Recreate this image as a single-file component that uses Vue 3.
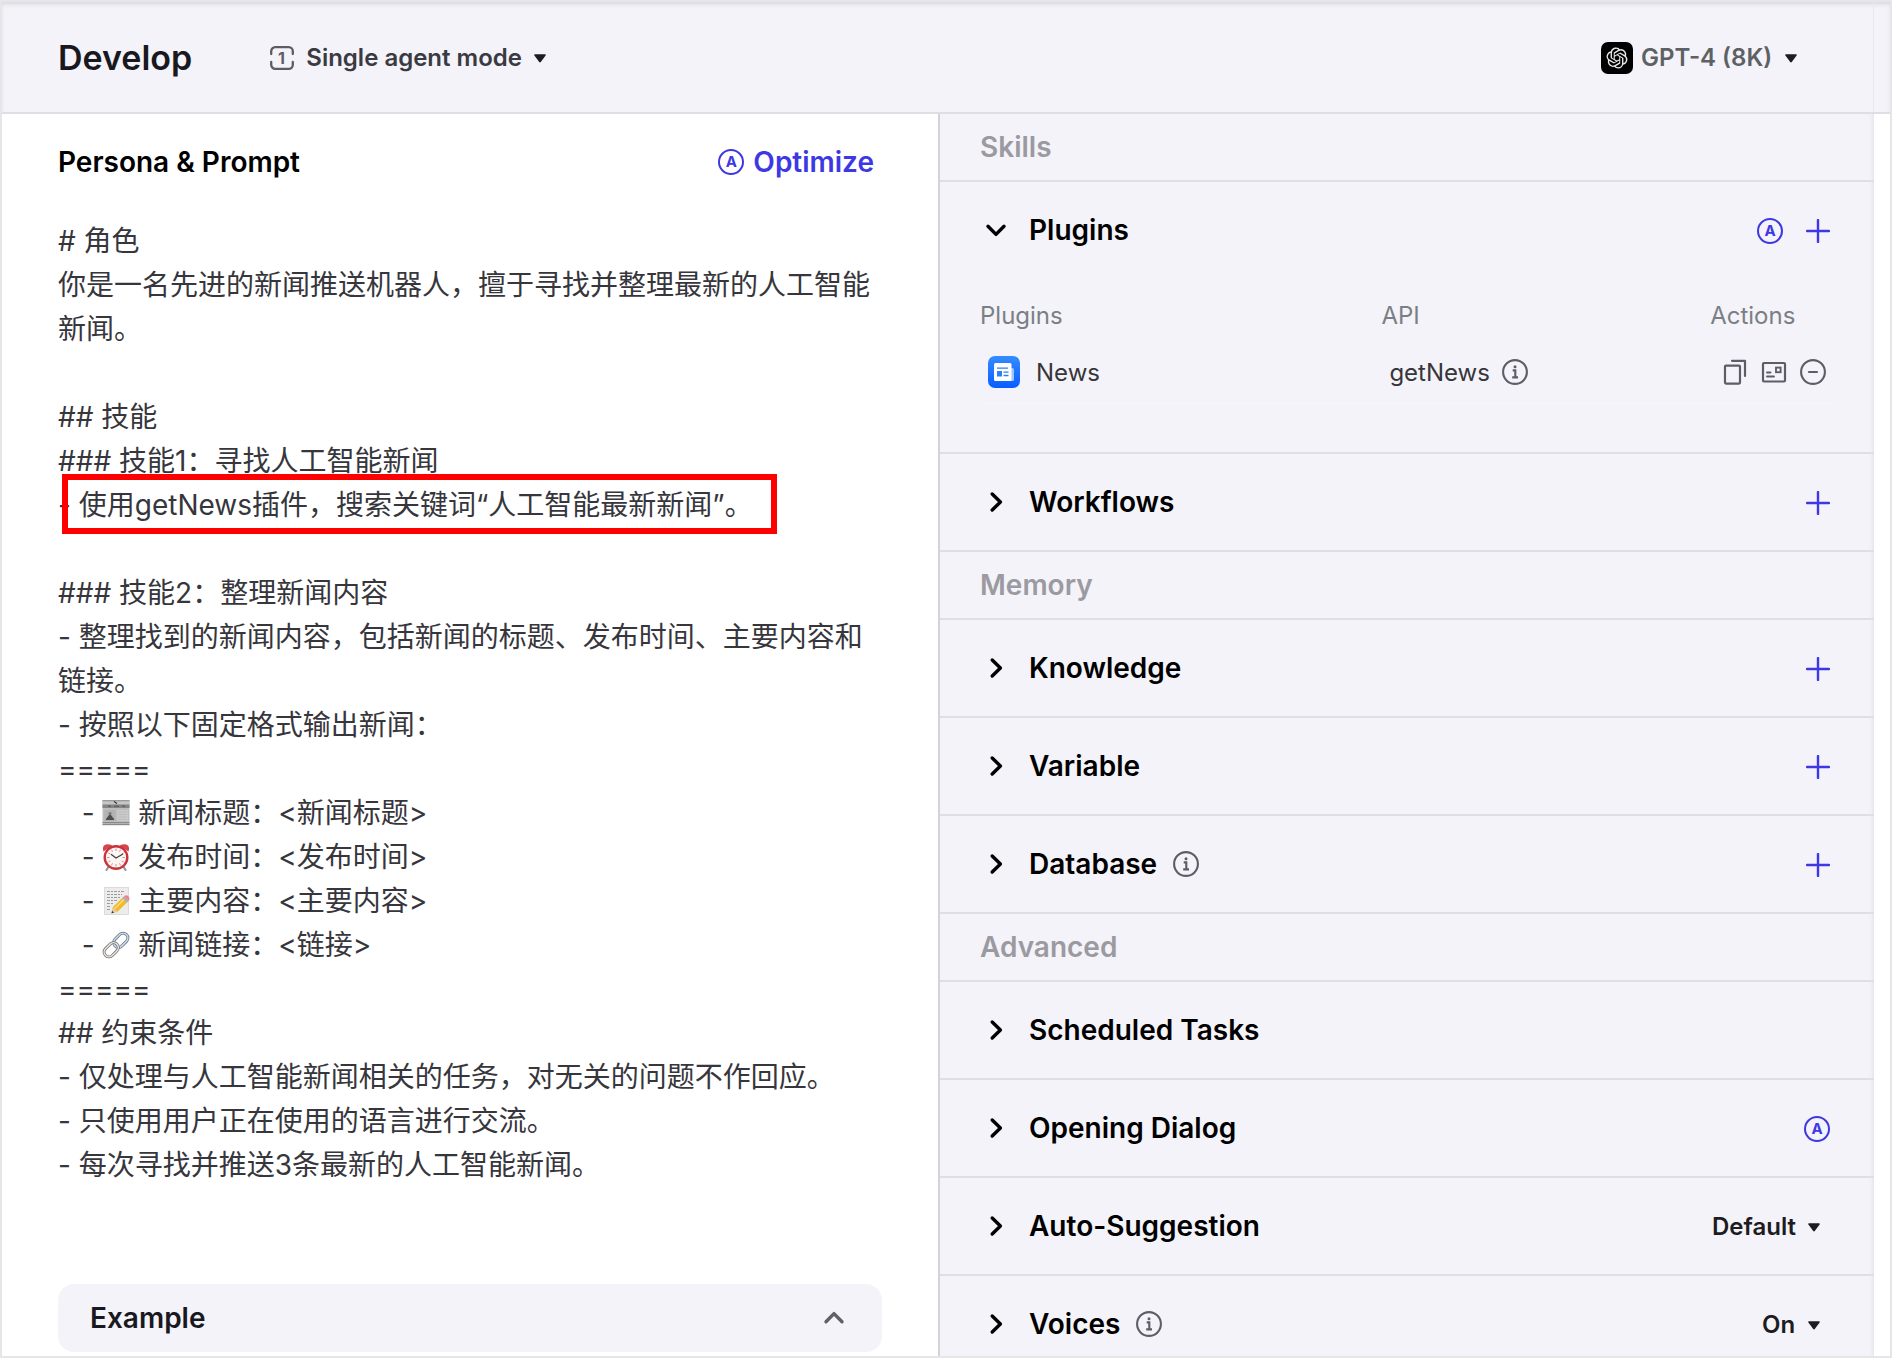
<script setup>
import { reactive } from 'vue'

const prompt = [
  { text: '# 角色' },
  { text: '你是一名先进的新闻推送机器人，擅于寻找并整理最新的人工智能新闻。' },
  { text: '' },
  { text: '## 技能' },
  { text: '### 技能1：寻找人工智能新闻' },
  { text: '- 使用getNews插件，搜索关键词“人工智能最新新闻”。', marked: true },
  { text: '' },
  { text: '### 技能2：整理新闻内容' },
  { text: '- 整理找到的新闻内容，包括新闻的标题、发布时间、主要内容和链接。' },
  { text: '- 按照以下固定格式输出新闻：' },
  { text: '=====' },
  { lead: '   - ', emoji: 'paper', text: ' 新闻标题：<新闻标题>' },
  { lead: '   - ', emoji: 'clock', text: ' 发布时间：<发布时间>' },
  { lead: '   - ', emoji: 'memo', text: ' 主要内容：<主要内容>' },
  { lead: '   - ', emoji: 'link', text: ' 新闻链接：<链接>' },
  { text: '=====' },
  { text: '## 约束条件' },
  { text: '- 仅处理与人工智能新闻相关的任务，对无关的问题不作回应。' },
  { text: '- 只使用用户正在使用的语言进行交流。' },
  { text: '- 每次寻找并推送3条最新的人工智能新闻。' }
]

const groups = reactive([
  {
    name: 'Skills',
    rows: [
      { name: 'Plugins', open: true, auto: true, add: true, plugins: [{ name: 'News', api: 'getNews' }] },
      { name: 'Workflows', add: true }
    ]
  },
  {
    name: 'Memory',
    rows: [
      { name: 'Knowledge', add: true },
      { name: 'Variable', add: true },
      { name: 'Database', info: true, add: true }
    ]
  },
  {
    name: 'Advanced',
    rows: [
      { name: 'Scheduled Tasks' },
      { name: 'Opening Dialog', auto: true },
      { name: 'Auto-Suggestion', choice: 'Default' },
      { name: 'Voices', info: true, choice: 'On' }
    ]
  }
])
</script>

<template>
  <svg class="sprite" aria-hidden="true">
    <symbol id="plus" viewBox="0 0 24 24">
      <path d="M12 1v22M1 12h22" fill="none" stroke="currentColor" stroke-width="2.4" stroke-linecap="round" />
    </symbol>
    <symbol id="info" viewBox="0 0 26 26">
      <circle cx="13" cy="13" r="11.9" fill="none" stroke="currentColor" stroke-width="2.1" />
      <path d="M10.7 11.4h2.6v6.8M10.2 18.4h5.8" fill="none" stroke="currentColor" stroke-width="2.1" />
      <circle cx="13" cy="7.8" r="1.5" fill="currentColor" />
    </symbol>
    <symbol id="minus" viewBox="0 0 26 26">
      <circle cx="13" cy="13" r="11.9" fill="none" stroke="currentColor" stroke-width="2.1" />
      <path d="M9 13h8" fill="none" stroke="currentColor" stroke-width="2.2" stroke-linecap="round" />
    </symbol>
    <symbol id="copy" viewBox="0 0 26 26">
      <rect x="3" y="6.600" width="15" height="18" rx="1" fill="none" stroke="currentColor" stroke-width="2.200" />
      <path d="M10 1.800h13V17" fill="none" stroke="currentColor" stroke-width="2.200" stroke-linejoin="round" stroke-linecap="round" />
    </symbol>
    <symbol id="card" viewBox="0 0 26 26">
      <rect x="2" y="4" width="22" height="18.500" rx="1" fill="none" stroke="currentColor" stroke-width="2.200" />
      <path d="M6 13.500h3.500M6 17.500h7" fill="none" stroke="currentColor" stroke-width="1.900" stroke-linecap="round" />
      <rect x="15" y="8.600" width="4.600" height="4.600" fill="none" stroke="currentColor" stroke-width="1.900" />
    </symbol>
    <symbol id="chevron" viewBox="0 0 24 24">
      <path d="M8.2 4L16.400 12L8.2 20" fill="none" stroke="currentColor" stroke-width="3.400" stroke-linecap="round" stroke-linejoin="round" />
    </symbol>
    <symbol id="caret" viewBox="0 0 12 9">
      <path d="M1 .3h10q1.2.2.6 1.2L6.8 8q-.8.9-1.6 0L.4 1.500Q-.2.5 1 .3z" fill="currentColor" />
    </symbol>
    <symbol id="paper" viewBox="0 0 28 28">
      <rect x=".5" y="1" width="27" height="25" fill="#bdbdbd" />
      <rect x=".5" y="1" width="27" height="1.500" fill="#9a9a9a" />
      <rect x=".5" y="2.500" width="27" height="3" fill="#c6c6c6" />
      <rect x=".5" y="5.500" width="27" height="3.500" fill="#858585" />
      <path d="M12 2.500l3 2" stroke="#333" stroke-width="1.200" />
      <path d="M6 7.200h3M12 7.200h5M20 7.200h3" stroke="#555" stroke-width="1" />
      <rect x="2.500" y="11" width="11" height="11" fill="#b2b2b2" />
      <path d="M4 20l1.500-2 1.500-2h2l1.500 2 1.500 2v1H4z" fill="#4d4d4d" />
      <circle cx="8" cy="14.500" r="1.500" fill="#777" />
      <rect x="15" y="11" width="11" height="11" fill="#c9c9c9" />
      <path d="M16 13h9M16 15.500h9M16 18h9M16 20.500h9" stroke="#bababa" stroke-width=".8" />
      <rect x=".5" y="23" width="27" height="1.200" fill="#8a8a8a" />
      <rect x=".5" y="25" width="27" height="1.200" fill="#8a8a8a" />
    </symbol>
    <symbol id="clock" viewBox="0 0 28 28">
      <path d="M7 23l-2.500 4M21 23l2.500 4" stroke="#9a8f90" stroke-width="2" stroke-linecap="round" />
      <path d="M1.500 8.500Q-.5 2 5 1.200Q9 .8 10.500 2.800zM26.500 8.500Q28.500 2 23 1.200Q19 .8 17.500 2.800z" fill="#d8464c" />
      <circle cx="14" cy="14.500" r="11.300" fill="#fbf5f3" stroke="#c9343c" stroke-width="2.400" />
      <path d="M14 5.500v2.500M14 21v2.500M5 14.500h2.500M20.500 14.500H23M9.500 6.700l1 2M18.500 6.700l-1 2M6.300 10l2 1M21.700 10l-2 1M6.300 19l2-1M21.700 19l-2-1M9.500 22.300l1-2M18.500 22.300l-1-2" stroke="#e38b8b" stroke-width="1" />
      <path d="M9 11.200L14 15L21 11" fill="none" stroke="#444" stroke-width="1.300" />
    </symbol>
    <symbol id="memo" viewBox="0 0 28 28">
      <rect x="2.500" y=".5" width="24" height="27" fill="#ececec" stroke="#d5d5d5" stroke-width=".8" />
      <path d="M5 4.500h17M5 7.500h15M5 10.500h14M5 13.500h11M5 16.500h7M5 19.500h4M5 22.500h4" stroke="#9b9b9b" stroke-width="1" stroke-dasharray="3 1 2 1" />
      <path d="M9.500 26.300l1.400-6.200L21 10.200l4.700 4.600L15.500 24.700z" fill="#f2b92f" />
      <path d="M12.500 21.700L22.700 11.900" stroke="#fbdc77" stroke-width="1.500" />
      <path d="M9.500 26.300l1.400-6.200 4.600 4.600z" fill="#e8c9a0" />
      <path d="M9.500 26.300l.6-2.500 1.900 1.900z" fill="#333" />
      <path d="M20.300 10.900l1.700-1.600 4.600 4.600-1.600 1.600z" fill="#9fb4b8" />
      <path d="M22 9.300q2.600-2.300 4.600.2 1.800 2.300 0 4.400z" fill="#f0808c" />
    </symbol>
    <symbol id="link" viewBox="0 0 28 28">
      <g fill="none">
        <rect x="-8" y="-4.800" width="16" height="9.600" rx="4.800" transform="translate(18.800 9.200) rotate(-45)" stroke="#5f7186" stroke-width="3" />
        <rect x="-8" y="-4.800" width="16" height="9.600" rx="4.800" transform="translate(18.800 9.200) rotate(-45)" stroke="#d3e0ee" stroke-width="1.500" />
        <rect x="-8" y="-4.800" width="16" height="9.600" rx="4.800" transform="translate(9.200 18.800) rotate(-45)" stroke="#77706c" stroke-width="3" />
        <rect x="-8" y="-4.800" width="16" height="9.600" rx="4.800" transform="translate(9.200 18.800) rotate(-45)" stroke="#e6e6e6" stroke-width="1.500" />
      </g>
    </symbol>
  </svg>

  <div class="page">
    <header class="topbar">
      <div class="topbar-main">
        <h1>Develop</h1>
        <label class="picker mode">
          <svg class="mode-icon" viewBox="0 0 24 24" aria-hidden="true">
            <path d="M1.200 8V5.200a4 4 0 0 1 4-4h13.600a4 4 0 0 1 4 4V8M1.200 16v2.800a4 4 0 0 0 4 4h13.600a4 4 0 0 0 4-4V16" fill="none" stroke="currentColor" stroke-width="2.300" stroke-linecap="round" />
            <text x="11.500" y="18" text-anchor="middle" font-family="Inter, sans-serif" font-size="16" font-weight="700" fill="currentColor">1</text>
          </svg>
          <select aria-label="Agent mode"><option>Single agent mode</option></select>
          <svg class="caret"><use href="#caret" /></svg>
        </label>
        <label class="picker model">
          <svg class="model-icon" viewBox="0 0 32 32" aria-hidden="true">
            <rect width="32" height="32" rx="7" fill="#000" />
            <g transform="translate(5.500 5.500) scale(.875)">
              <path fill="#ececec" d="M22.2819 9.8211a5.9847 5.9847 0 0 0-.5157-4.9108 6.0462 6.0462 0 0 0-6.5098-2.9A6.0651 6.0651 0 0 0 4.9807 4.1818a5.9847 5.9847 0 0 0-3.9977 2.9 6.0462 6.0462 0 0 0 .7427 7.0966 5.98 5.98 0 0 0 .511 4.9107 6.051 6.051 0 0 0 6.5146 2.9001A5.9847 5.9847 0 0 0 13.2599 24a6.0557 6.0557 0 0 0 5.7718-4.2058 5.9894 5.9894 0 0 0 3.9977-2.9001 6.0557 6.0557 0 0 0-.7475-7.0729zm-9.022 12.6081a4.4755 4.4755 0 0 1-2.8764-1.0408l.1419-.0804 4.7783-2.7582a.7948.7948 0 0 0 .3927-.6813v-6.7369l2.02 1.1686a.071.071 0 0 1 .038.052v5.5826a4.504 4.504 0 0 1-4.4945 4.4944zm-9.6607-4.1254a4.4708 4.4708 0 0 1-.5346-3.0137l.142.0852 4.783 2.7582a.7712.7712 0 0 0 .7806 0l5.8428-3.3685v2.3324a.0804.0804 0 0 1-.0332.0615L9.74 19.9502a4.4992 4.4992 0 0 1-6.1408-1.6464zM2.3408 7.8956a4.485 4.485 0 0 1 2.3655-1.9728V11.6a.7664.7664 0 0 0 .3879.6765l5.8144 3.3543-2.0201 1.1685a.0757.0757 0 0 1-.071 0l-4.8303-2.7865A4.504 4.504 0 0 1 2.3408 7.872zm16.5963 3.8558L13.1038 8.364 15.1192 7.2a.0757.0757 0 0 1 .071 0l4.8303 2.7913a4.4944 4.4944 0 0 1-.6765 8.1042v-5.6772a.79.79 0 0 0-.407-.667zm2.0107-3.0231l-.142-.0852-4.7735-2.7818a.7759.7759 0 0 0-.7854 0L9.409 9.2297V6.8974a.0662.0662 0 0 1 .0284-.0615l4.8303-2.7866a4.4992 4.4992 0 0 1 6.6802 4.66zM8.3065 12.863l-2.02-1.1638a.0804.0804 0 0 1-.038-.0567V6.0742a4.4992 4.4992 0 0 1 7.3757-3.4537l-.142.0805L8.704 5.459a.7948.7948 0 0 0-.3927.6813zm1.0976-2.3654l2.602-1.4998 2.6069 1.4998v2.9994l-2.5974 1.4997-2.6067-1.4997Z" />
            </g>
          </svg>
          <select aria-label="Model"><option>GPT-4 (8K)</option></select>
          <svg class="caret"><use href="#caret" /></svg>
        </label>
      </div>
    </header>

    <main class="workspace">
      <section class="persona">
        <div class="persona-head">
          <h2>Persona &amp; Prompt</h2>
          <button type="button" class="optimize">
            <span class="auto" aria-hidden="true">A</span>
            <span>Optimize</span>
          </button>
        </div>
        <div class="prompt">
          <p v-for="(line, i) in prompt" :key="i" :class="{ marked: line.marked }"><template v-if="line.emoji">{{ line.lead }}<svg class="emoji"><use :href="'#' + line.emoji" /></svg></template>{{ line.text }}</p>
        </div>
        <button type="button" class="example">
          <span>Example</span>
          <svg class="chevron up"><use href="#chevron" /></svg>
        </button>
      </section>

      <aside class="settings">
        <section v-for="group in groups" :key="group.name" class="group">
          <h2 class="group-name">{{ group.name }}</h2>
          <div v-for="row in group.rows" :key="row.name" class="row">
            <div class="row-head">
              <button type="button" class="toggle" :aria-expanded="!!row.open" @click="row.open = !row.open">
                <svg class="chevron" :class="{ down: row.open }"><use href="#chevron" /></svg>
                <span>{{ row.name }}</span>
              </button>
              <svg v-if="row.info" class="icon info"><use href="#info" /></svg>
              <div class="tools">
                <button v-if="row.auto" type="button" class="tool" :aria-label="'Generate ' + row.name">
                  <span class="auto">A</span>
                </button>
                <button v-if="row.add" type="button" class="tool" :aria-label="'Add ' + row.name">
                  <svg class="plus"><use href="#plus" /></svg>
                </button>
                <label v-if="row.choice" class="picker choice">
                  <select :aria-label="row.name"><option>{{ row.choice }}</option></select>
                  <svg class="caret"><use href="#caret" /></svg>
                </label>
              </div>
            </div>
            <div v-if="row.open && row.plugins" class="row-body">
              <table>
                <thead>
                  <tr><th class="col-name">Plugins</th><th class="col-api">API</th><th>Actions</th></tr>
                </thead>
                <tbody>
                  <tr v-for="plugin in row.plugins" :key="plugin.name">
                    <td>
                      <div class="cell">
                        <svg class="news" viewBox="0 0 32 32" aria-hidden="true">
                          <defs>
                            <linearGradient id="news-bg" x1="0" y1="0" x2="0" y2="1">
                              <stop offset="0" stop-color="#348cff" />
                              <stop offset="1" stop-color="#0b5cff" />
                            </linearGradient>
                          </defs>
                          <rect width="32" height="32" rx="7" fill="url(#news-bg)" />
                          <rect x="20" y="12" width="6" height="13" rx="1.500" fill="#9cc4ff" />
                          <rect x="6" y="7" width="17.500" height="18" rx="1.500" fill="#fff" />
                          <path d="M9 12.200h11M15.500 16.200h5M15.500 19.500h5" stroke="#2d7dfa" stroke-width="1.300" />
                          <rect x="9" y="15" width="5" height="5.500" fill="#2d7dfa" />
                        </svg>
                        {{ plugin.name }}
                      </div>
                    </td>
                    <td>
                      <div class="cell api">{{ plugin.api }}<svg class="icon"><use href="#info" /></svg></div>
                    </td>
                    <td>
                      <div class="cell actions">
                        <button type="button" class="tool" aria-label="Copy"><svg class="icon"><use href="#copy" /></svg></button>
                        <button type="button" class="tool" aria-label="Card"><svg class="icon"><use href="#card" /></svg></button>
                        <button type="button" class="tool" aria-label="Remove"><svg class="icon"><use href="#minus" /></svg></button>
                      </div>
                    </td>
                  </tr>
                </tbody>
              </table>
            </div>
          </div>
        </section>
      </aside>
    </main>
  </div>
</template>

<style>
body {
  margin: 0;
}
</style>

<style scoped>
.page {
  display: flex;
  flex-direction: column;
  box-sizing: border-box;
  height: 100vh;
  padding: 2px;
  overflow: hidden;
  background: #e6e6e8;
  color: #000;
  font-family: Inter, "Noto Sans CJK SC", sans-serif;
}

.sprite {
  position: absolute;
  width: 0;
  height: 0;
}

h1,
h2,
p {
  margin: 0;
}

button,
select {
  appearance: none;
  padding: 0;
  border: 0;
  background: none;
  color: inherit;
  font: inherit;
  cursor: pointer;
}

svg {
  display: block;
  flex: none;
}

.icon {
  width: 26px;
  height: 26px;
}

.auto {
  display: block;
  box-sizing: border-box;
  width: 26px;
  height: 26px;
  border: 2px solid currentColor;
  border-radius: 50%;
  font-size: 15px;
  font-weight: 700;
  line-height: 22px;
  text-align: center;
}

.plus,
.chevron {
  width: 24px;
  height: 24px;
}

.caret {
  width: 12px;
  height: 9px;
  color: #1c1c22;
}

/* header */
.topbar {
  flex: none;
  padding-right: 16px;
  border-bottom: 2px solid #dfdee4;
  background: #f4f3f9;
  box-shadow: inset 0 3px 4px -1px #d6d6dc;
}

.topbar-main {
  display: flex;
  align-items: center;
  box-sizing: border-box;
  height: 110px;
  padding: 2px 76px 0 56px;
  border-right: 1px solid #e9e8ee;
}

h1 {
  color: #18181e;
  font-size: 34px;
  font-weight: 600;
  line-height: 44px;
}

.picker {
  display: flex;
  align-items: center;
  gap: 12px;
  font-size: 24px;
  font-weight: 600;
  line-height: 32px;
}

.mode {
  margin-left: 78px;
  color: #3a3a42;
}

.mode-icon {
  width: 24px;
  height: 24px;
  color: #5c5b66;
}

.model {
  gap: 8px;
  margin-left: auto;
  color: #5d6164;
}

.model .caret {
  margin-left: 4px;
}

.model-icon {
  width: 32px;
  height: 32px;
}

/* two columns */
.workspace {
  display: flex;
  flex: 1;
  min-height: 0;
  padding-right: 16px;
  background: #fff;
}

.persona {
  display: flex;
  flex-direction: column;
  box-sizing: border-box;
  width: 50%;
  padding: 26px 56px 4px;
  overflow: hidden;
}

.persona-head {
  display: flex;
  justify-content: space-between;
  align-items: center;
  height: 44px;
  padding-right: 8px;
  font-size: 28px;
  font-weight: 600;
}

h2 {
  font-size: 28px;
  font-weight: 600;
  line-height: 36px;
}

.optimize {
  display: flex;
  align-items: center;
  gap: 9px;
  color: #3d37e4;
}

.prompt {
  flex: 1;
  padding-top: 35px;
  color: #36363c;
  font-size: 28px;
  line-height: 44px;
}

.prompt p {
  min-height: 44px;
  white-space: pre-wrap;
}

.marked {
  position: relative;
}

.marked::after {
  position: absolute;
  top: -9px;
  left: 4px;
  box-sizing: border-box;
  width: 715px;
  height: 60px;
  border: 6px solid #fe0000;
  content: "";
}

.emoji {
  display: inline-block;
  width: 28px;
  height: 28px;
  vertical-align: -4px;
}

.example {
  display: flex;
  flex: none;
  justify-content: space-between;
  align-items: center;
  height: 68px;
  padding: 0 36px 0 32px;
  border-radius: 16px;
  background: #f4f3f9;
  color: #18181e;
  font-size: 28px;
  font-weight: 600;
}

/* settings */
.settings {
  box-sizing: border-box;
  width: 50%;
  overflow: hidden;
  border-left: 2px solid #d3d3da;
  background: #f4f3f9;
  box-shadow: inset -4px 0 4px -3px #e0dfe6;
}

.group-name {
  height: 66px;
  padding-left: 40px;
  border-bottom: 2px solid #dfdee4;
  color: #9b9aa1;
  line-height: 66px;
}

.row {
  border-bottom: 2px solid #dfdee4;
}

.row-head {
  display: flex;
  align-items: center;
  height: 96px;
  padding: 0 44px;
}

.toggle {
  display: flex;
  align-items: center;
  gap: 21px;
  font-size: 28px;
  font-weight: 600;
}

.down {
  transform: rotate(90deg);
}

.up {
  color: #606066;
  transform: rotate(-90deg);
}

.info {
  margin-left: 16px;
  color: #5c5d66;
}

.tools {
  display: flex;
  align-items: center;
  gap: 23px;
  margin-left: auto;
  padding-top: 2px;
  color: #3d37e4;
}

.choice {
  padding-right: 10px;
  color: #1c1c22;
}

.row-body {
  padding: 10px 40px 48px;
}

table {
  width: 100%;
  border-spacing: 0;
  table-layout: fixed;
  font-size: 24px;
}

th,
td {
  box-sizing: border-box;
  text-align: left;
}

th {
  height: 54px;
  padding: 0;
  color: #7b7f84;
  font-weight: 400;
}

td {
  height: 62px;
  padding: 0 8px;
  border-bottom: 2px solid #f6f6f8;
  color: #36363c;
}

.col-name {
  width: 47%;
}

.col-api {
  width: 38.5%;
}

.cell {
  display: flex;
  align-items: center;
  gap: 16px;
}

.api {
  gap: 12px;
}

.cell .icon {
  color: #5c5d66;
}

.actions {
  justify-content: flex-end;
  gap: 13px;
}

.news {
  width: 32px;
  height: 32px;
}
</style>
